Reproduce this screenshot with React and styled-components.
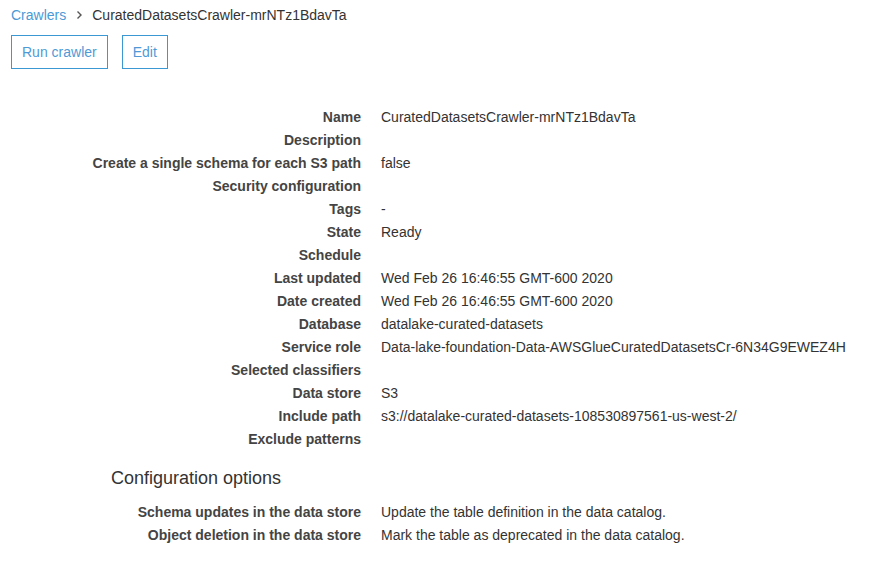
import React from "react";
import styled, { createGlobalStyle } from "styled-components";

const Global = createGlobalStyle`
  body {
    margin: 0;
    background: #fff;
    font-family: "Liberation Sans", Arial, sans-serif;
    font-size: 14px;
    color: #333;
  }
`;

const Page = styled.div`
  padding: 5px 11px 0;
`;

const Crumbs = styled.nav`
  display: flex;
  align-items: center;
  height: 20px;
  line-height: 20px;
`;

const CrumbLink = styled.a`
  color: #4a9ad6;
  text-decoration: none;
`;

const Sep = styled.span`
  display: inline-flex;
  margin: 0 9px 0 10px;
  color: #555;
`;

const Toolbar = styled.div`
  display: flex;
  gap: 14px;
  margin-top: 10px;
`;

const Button = styled.button`
  height: 34px;
  padding: 0 10px;
  background: #fff;
  border: 1px solid #3c98d3;
  border-radius: 0;
  color: #4f9ad6;
  font-family: inherit;
  font-size: 14px;
`;

const Details = styled.dl`
  display: grid;
  grid-template-columns: 350px 1fr;
  column-gap: 20px;
  margin: 37px 0 0;
  line-height: 23px;
`;

const Label = styled.dt`
  text-align: right;
  font-weight: bold;
  color: #444;
`;

const Value = styled.dd`
  margin: 0;
  color: #333;
  min-height: 23px;
`;

const Heading = styled.h3`
  margin: 15px 0 0 100px;
  font-size: 18px;
  font-weight: normal;
  line-height: 24px;
  color: #333;
`;

const ConfigDetails = styled(Details)`
  margin-top: 11px;
`;

const Chevron = () => (
  <svg width="7" height="10" viewBox="0 0 7 10">
    <path d="M1.5 1.5 L5 5 L1.5 8.5" fill="none" stroke="#555" strokeWidth="1.4" />
  </svg>
);

const props = [
  ["Name", "CuratedDatasetsCrawler-mrNTz1BdavTa"],
  ["Description", ""],
  ["Create a single schema for each S3 path", "false"],
  ["Security configuration", ""],
  ["Tags", "-"],
  ["State", "Ready"],
  ["Schedule", ""],
  ["Last updated", "Wed Feb 26 16:46:55 GMT-600 2020"],
  ["Date created", "Wed Feb 26 16:46:55 GMT-600 2020"],
  ["Database", "datalake-curated-datasets"],
  ["Service role", "Data-lake-foundation-Data-AWSGlueCuratedDatasetsCr-6N34G9EWEZ4H"],
  ["Selected classifiers", ""],
  ["Data store", "S3"],
  ["Include path", "s3://datalake-curated-datasets-108530897561-us-west-2/"],
  ["Exclude patterns", ""],
];

const config = [
  ["Schema updates in the data store", "Update the table definition in the data catalog."],
  ["Object deletion in the data store", "Mark the table as deprecated in the data catalog."],
];

export default function App() {
  return (
    <Page>
      <Global />
      <Crumbs>
        <CrumbLink href="#">Crawlers</CrumbLink>
        <Sep>
          <Chevron />
        </Sep>
        <span>CuratedDatasetsCrawler-mrNTz1BdavTa</span>
      </Crumbs>
      <Toolbar>
        <Button>Run crawler</Button>
        <Button>Edit</Button>
      </Toolbar>
      <Details>
        {props.map(([k, v]) => (
          <React.Fragment key={k}>
            <Label>{k}</Label>
            <Value>{v}</Value>
          </React.Fragment>
        ))}
      </Details>
      <Heading>Configuration options</Heading>
      <ConfigDetails>
        {config.map(([k, v]) => (
          <React.Fragment key={k}>
            <Label>{k}</Label>
            <Value>{v}</Value>
          </React.Fragment>
        ))}
      </ConfigDetails>
    </Page>
  );
}
